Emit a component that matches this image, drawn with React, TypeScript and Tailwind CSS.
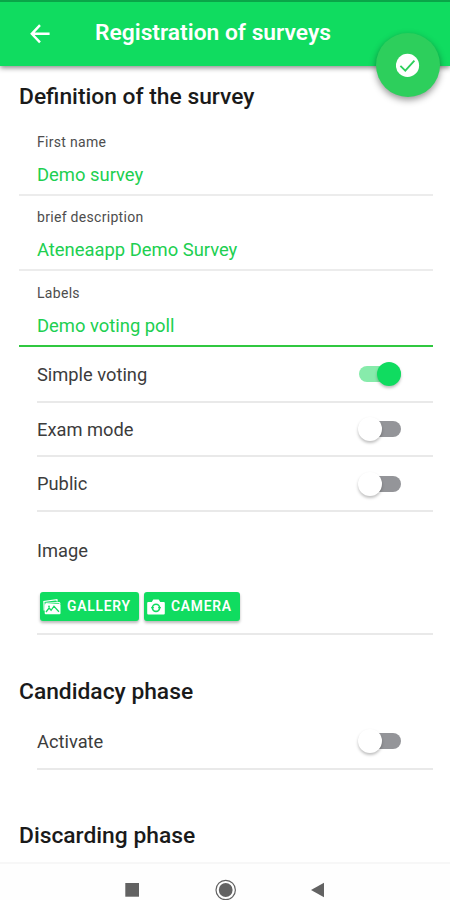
import React from 'react';

function Heading({ text, className }: { text: string; className: string }) {
  return (
    <div className={`flex items-center whitespace-nowrap pl-[19px] text-[22.8px] font-medium leading-none text-[#1a1a1a] ${className}`}>
      <span>{text}</span>
    </div>
  );
}

function Field({ label, value, className }: { label: string; value: string; className: string }) {
  return (
    <div className={`ml-[19px] mr-[17px] flex flex-col whitespace-nowrap pl-[18px] ${className}`}>
      <div className="flex h-[20px] items-center text-[14px] leading-none tracking-[0.3px] text-[#4d4d4d]">{label}</div>
      <div className="mt-[10px] flex h-[26px] items-center text-[18.4px] leading-none text-[#20cf50]">{value}</div>
    </div>
  );
}

function Toggle({ on }: { on?: boolean }) {
  return (
    <span className={`relative mr-[32px] block h-[16px] w-[42px] rounded-full ${on ? 'bg-[#87ebab]' : 'bg-[#949599]'}`}>
      <span
        className={`absolute top-[-4px] h-[24px] w-[24px] rounded-full shadow-[0_2px_3px_rgba(0,0,0,0.25)] ${on ? 'right-0 bg-[#10dc60]' : 'left-[-1px] bg-white'}`}
      />
    </span>
  );
}

function ToggleRow({ label, on, className }: { label: string; on?: boolean; className: string }) {
  return (
    <div className={`ml-[37px] mr-[17px] flex items-center justify-between border-b-2 border-[#e9e9e9] text-[18.3px] leading-none text-[#3c3c3c] ${className}`}>
      <span className="whitespace-nowrap pt-[2px]">{label}</span>
      <Toggle on={on} />
    </div>
  );
}

export default function App() {
  return (
    <div className="relative flex h-[900px] w-[450px] flex-col overflow-hidden bg-white font-['Roboto',sans-serif]">
      <header className="flex h-[66px] shrink-0 items-center border-t-2 border-[#0aa548] bg-[#10dc60] text-white shadow-[0_2px_5px_rgba(0,0,0,0.45)]">
        <svg className="ml-[30px] h-[20px] w-[20px]" viewBox="0 0 20 20" fill="none" stroke="currentColor" strokeWidth="2.4">
          <path d="M10 1.2 1.8 9.8 10 18.4M2 9.8h17.6" />
        </svg>
        <h1 className="ml-[45px] whitespace-nowrap pb-px text-[22.8px] font-semibold leading-none">Registration of surveys</h1>
      </header>
      <button className="absolute left-[376px] top-[33px] flex h-[64px] w-[64px] items-center justify-center rounded-full bg-[#2dcf5c] shadow-[0_3px_7px_rgba(0,0,0,0.42)]">
        <svg className="h-[24px] w-[24px]" viewBox="0 0 24 24" fill="none">
          <circle cx="11.5" cy="12.4" r="11.6" fill="#fff" />
          <path d="m4.4 12.9 4.9 4.7 9.1-9.9" stroke="#2dcf5c" strokeWidth="1.8" />
        </svg>
      </button>

      <main className="flex flex-1 flex-col">
        <Heading text="Definition of the survey" className="h-[61px] pt-[2px]" />
        <Field label="First name" value="Demo survey" className="h-[69px] border-b-2 border-[#ececec] pt-[5px]" />
        <Field label="brief description" value="Ateneaapp Demo Survey" className="h-[75px] border-b-2 border-[#ececec] pt-[11px]" />
        <Field label="Labels" value="Demo voting poll" className="h-[76px] border-b-2 border-[#30c840] pt-[12px]" />
        <ToggleRow label="Simple voting" on className="h-[56px]" />
        <ToggleRow label="Exam mode" className="h-[54px]" />
        <ToggleRow label="Public" className="h-[55px]" />
        <div className="ml-[37px] mr-[17px] flex h-[123px] flex-col border-b-2 border-[#e9e9e9]">
          <div className="mt-[28px] flex h-[22px] items-center text-[18.3px] leading-none text-[#3c3c3c]">Image</div>
          <div className="ml-[3px] mt-[30px] flex gap-[5px] text-[13.8px] font-semibold leading-none text-white">
            <button className="flex h-[29px] w-[99px] items-center whitespace-nowrap rounded-[3px] bg-[#10dc60] pl-[3px] shadow-[0_2px_3px_rgba(0,0,0,0.28)]">
              <svg className="mr-[6px] h-[18px] w-[18px] shrink-0" viewBox="0 0 18 18" fill="none">
                <path d="M1.2 12.5.9 3.5l13-1.8.3 1.8" stroke="#fff" strokeWidth="1.2" />
                <path d="m2.5 5.4 13.8-.9.9 1.4" stroke="#fff" strokeWidth="1.1" />
                <rect x="1.7" y="6" width="15.8" height="10.2" rx="1" fill="#fff" />
                <path d="m3 14 3.1-4 2 2.3 2.9-4.1 4.9 5.5" stroke="#10dc60" strokeWidth="1.3" />
                <circle cx="6" cy="8.5" r=".9" fill="#10dc60" />
              </svg>
              <span className="tracking-[0.8px]">GALLERY</span>
            </button>
            <button className="flex h-[29px] w-[96px] items-center whitespace-nowrap rounded-[3px] bg-[#10dc60] pl-[3px] shadow-[0_2px_3px_rgba(0,0,0,0.28)]">
              <svg className="mr-[6px] h-[18px] w-[18px] shrink-0" viewBox="0 0 18 18" fill="none">
                <path d="M1.2 4h3.6L6.3 1.6h5.4L13.2 4h3.6q1 0 1 1v10.6q0 1-1 1H1.2q-1 0-1-1V5q0-1 1-1z" fill="#fff" />
                <circle cx="9" cy="9.8" r="3.6" stroke="#10dc60" strokeWidth="1.6" />
                <path d="M4 9.7h3M11 9.7h3" stroke="#10dc60" strokeWidth="1" />
              </svg>
              <span className="tracking-[0.8px]">CAMERA</span>
            </button>
          </div>
        </div>
        <Heading text="Candidacy phase" className="mt-[36px] h-[42px]" />
        <ToggleRow label="Activate" className="h-[57px] pt-px" />
        <Heading text="Discarding phase" className="mt-[46px] h-[40px]" />
      </main>

      <nav className="flex h-[38px] shrink-0 items-start border-t-2 border-[#f7f7f7] bg-[#fefefe] pt-[12px]">
        <svg className="h-[24px] w-[450px] shrink-0" viewBox="0 0 450 24">
          <rect x="125.3" y="7" width="13.7" height="13.7" fill="#626262" />
          <circle cx="225.7" cy="14" r="9.7" fill="none" stroke="#626262" strokeWidth="1.2" />
          <circle cx="225.7" cy="14" r="6.9" fill="#626262" />
          <path d="m311 14 13-7.2v14.4z" fill="#626262" />
        </svg>
      </nav>
    </div>
  );
}
